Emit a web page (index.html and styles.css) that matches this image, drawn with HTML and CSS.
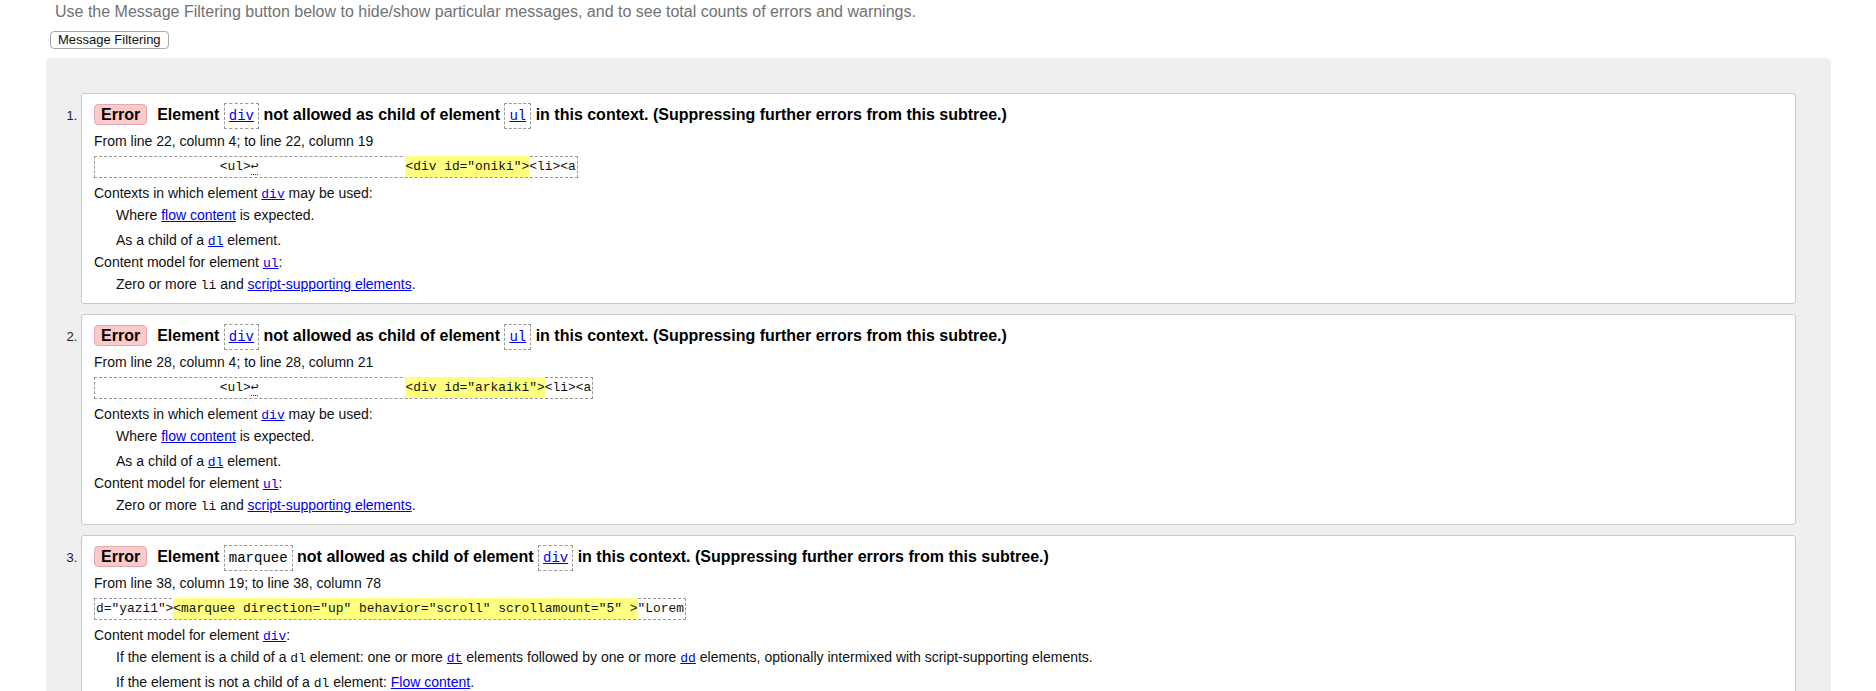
FILE: index.html
```html
<!DOCTYPE html>
<html lang="en">
<head>
<meta charset="utf-8">
<title>Validator messages</title>
<link rel="stylesheet" href="styles.css">
</head>
<body>
<p class="intro">Use the Message Filtering button below to hide/show particular messages, and to see total counts of errors and warnings.</p>
<button class="filter-btn" type="button">Message Filtering</button>
<div class="panel">
  <ol class="messages">
    <li class="msg">
      <p class="title"><strong class="badge">Error</strong><span class="msg-text">Element <code class="tag"><a href="#">div</a></code> not allowed as child of element <code class="tag"><a href="#">ul</a></code> in this context. (Suppressing further errors from this subtree.)</span></p>
      <p class="loc">From line 22, column 4; to line 22, column 19</p>
      <code class="extract">                &lt;ul&gt;<span class="lf">↩</span>                   <mark class="hl">&lt;div id="oniki"&gt;</mark>&lt;li&gt;&lt;a</code>
      <dl class="details">
        <dt>Contexts in which element <a href="#"><code>div</code></a> may be used:</dt>
        <dd>Where <a href="#">flow content</a> is expected.</dd>
        <dd class="gap">As a child of a <a href="#"><code>dl</code></a> element.</dd>
        <dt>Content model for element <a href="#"><code>ul</code></a>:</dt>
        <dd>Zero or more <code>li</code> and <a href="#">script-supporting elements</a>.</dd>
      </dl>
    </li>
    <li class="msg">
      <p class="title"><strong class="badge">Error</strong><span class="msg-text">Element <code class="tag"><a href="#">div</a></code> not allowed as child of element <code class="tag"><a href="#">ul</a></code> in this context. (Suppressing further errors from this subtree.)</span></p>
      <p class="loc">From line 28, column 4; to line 28, column 21</p>
      <code class="extract">                &lt;ul&gt;<span class="lf">↩</span>                   <mark class="hl">&lt;div id="arkaiki"&gt;</mark>&lt;li&gt;&lt;a</code>
      <dl class="details">
        <dt>Contexts in which element <a href="#"><code>div</code></a> may be used:</dt>
        <dd>Where <a href="#">flow content</a> is expected.</dd>
        <dd class="gap">As a child of a <a href="#"><code>dl</code></a> element.</dd>
        <dt>Content model for element <a href="#"><code>ul</code></a>:</dt>
        <dd>Zero or more <code>li</code> and <a href="#">script-supporting elements</a>.</dd>
      </dl>
    </li>
    <li class="msg">
      <p class="title"><strong class="badge">Error</strong><span class="msg-text">Element <code class="tag">marquee</code> not allowed as child of element <code class="tag"><a href="#">div</a></code> in this context. (Suppressing further errors from this subtree.)</span></p>
      <p class="loc">From line 38, column 19; to line 38, column 78</p>
      <code class="extract">d="yazi1"&gt;<mark class="hl">&lt;marquee direction="up" behavior="scroll" scrollamount="5" &gt;</mark>"Lorem</code>
      <dl class="details">
        <dt>Content model for element <a href="#"><code>div</code></a>:</dt>
        <dd>If the element is a child of a <code>dl</code> element: one or more <a href="#"><code>dt</code></a> elements followed by one or more <a href="#"><code>dd</code></a> elements, optionally intermixed with script-supporting elements.</dd>
        <dd class="gap">If the element is not a child of a <code>dl</code> element: <a href="#">Flow content</a>.</dd>
      </dl>
    </li>
  </ol>
</div>
</body>
</html>
```
FILE: styles.css
```css
html, body {
  margin: 0;
  padding: 0;
  background: #fff;
}
body {
  font-family: "Liberation Sans", Arial, sans-serif;
  color: #111;
}
.intro {
  margin: 2px 0 0 55px;
  font-size: 16px;
  line-height: 19px;
  color: #727272;
}
.filter-btn {
  display: block;
  margin: 10px 0 0 50px;
  height: 18px;
  padding: 0 7px;
  font-family: "Liberation Sans", Arial, sans-serif;
  font-size: 13px;
  line-height: 16px;
  color: #111;
  background: #fff;
  border: 1px solid #a8a8a8;
  border-radius: 4px;
}
.panel {
  margin: 9px 45px 0 46px;
  padding: 35px 35px 20px;
  background: #efefef;
  border-radius: 5px;
}
.messages {
  margin: 0;
  padding: 0;
  list-style: decimal outside;
}
.msg {
  background: #fff;
  border: 1px solid #c9c9c9;
  border-radius: 3px;
  padding: 8px 12px 10px;
  margin: 0 0 10px;
  font-size: 14px;
}
.msg::marker {
  font-size: 13px;
  color: #222;
}
.title {
  margin: 0;
  height: 25px;
  line-height: 25px;
  font-size: 16px;
  font-weight: bold;
  color: #000;
  white-space: nowrap;
}
.badge {
  display: inline-block;
  vertical-align: top;
  margin: 2px 10px 0 0;
  padding: 0 6px;
  line-height: 19px;
  background: #fccaca;
  border: 1px solid #e2abab;
  border-radius: 4px;
  font-weight: bold;
  color: #000;
}
.tag {
  font-family: "Liberation Mono", "DejaVu Sans Mono", monospace;
  font-size: 14px;
  font-weight: normal;
  color: #000;
  padding: 4px 4px;
  border: 1px dashed #999;
}
a {
  color: #0000ee;
  text-decoration: underline;
}
code {
  font-family: "Liberation Mono", "DejaVu Sans Mono", monospace;
  font-size: 13px;
}
.details code {
  line-height: 1;
}
.loc {
  margin: 5px 0 0;
  line-height: 18px;
}
.extract {
  display: block;
  width: fit-content;
  margin-top: 6px;
  padding: 0 1px;
  font-size: 12.9px;
  line-height: 20px;
  white-space: pre;
  border: 1px dashed #999;
  color: #111;
}
.hl {
  background: #ffff80;
  color: #111;
  padding: 3px 0;
}
.lf {
  border-bottom: 1px dotted #333;
}
.details {
  margin: 6px 0 0;
  line-height: 18px;
}
.details dt,
.details dd {
  margin-top: 4px;
}
.details > :first-child {
  margin-top: 0;
}
.details dd {
  margin-left: 22px;
}
.details dd.gap {
  margin-top: 7px;
}
```
